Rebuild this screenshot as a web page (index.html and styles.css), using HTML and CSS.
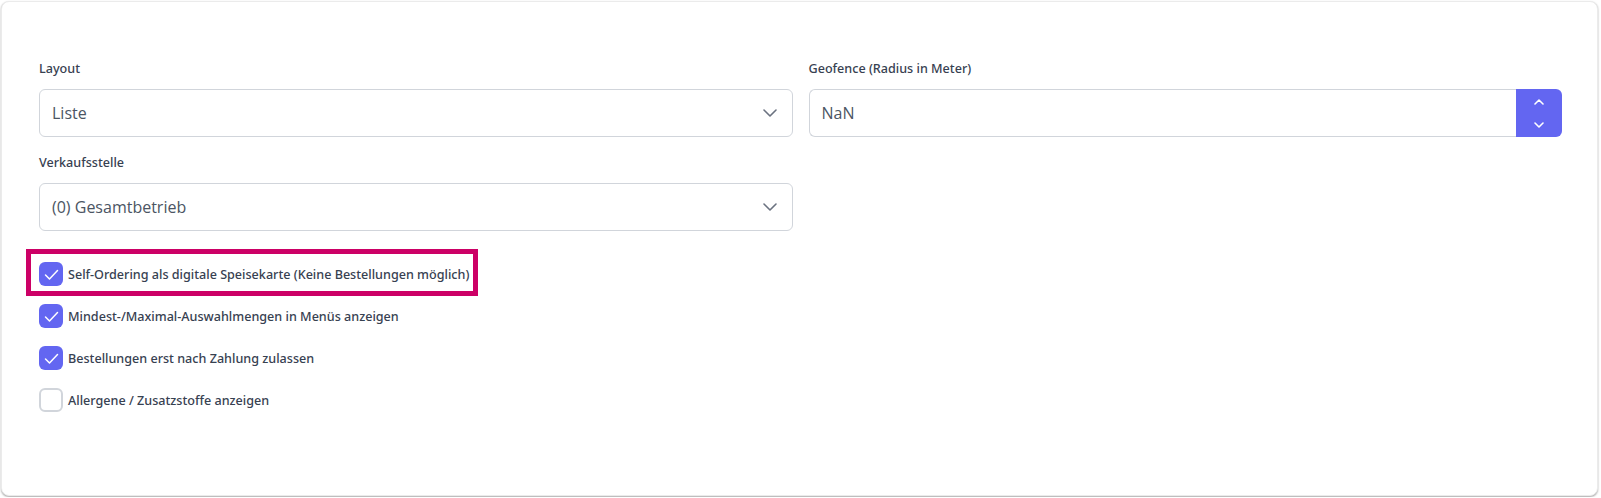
FILE: index.html
```html
<!DOCTYPE html>
<html lang="de">
<head>
    <meta charset="UTF-8">
    <meta name="viewport" content="width=device-width, initial-scale=1.0">
    <title>Self-Ordering Einstellungen</title>
    <link rel="stylesheet" href="styles.css">
</head>
<body>
    <div class="card">
        <div class="form-grid">
            <div class="field">
                <label class="field-label">Layout</label>
                <div class="select">
                    <span class="select-value">Liste</span>
                    <svg class="chevron" width="14" height="8" viewBox="0 0 14 8"><path d="M1 1 L7 7 L13 1" fill="none" stroke="#6b7280" stroke-width="1.6" stroke-linecap="round" stroke-linejoin="round"/></svg>
                </div>
            </div>

            <div class="field">
                <label class="field-label">Geofence (Radius in Meter)</label>
                <div class="number-input">
                    <div class="number-value">NaN</div>
                    <div class="stepper">
                        <svg width="10" height="6" viewBox="0 0 10 6"><path d="M1 5 L5 1 L9 5" fill="none" stroke="#fff" stroke-width="1.6" stroke-linecap="round" stroke-linejoin="round"/></svg>
                        <svg width="10" height="6" viewBox="0 0 10 6"><path d="M1 1 L5 5 L9 1" fill="none" stroke="#fff" stroke-width="1.6" stroke-linecap="round" stroke-linejoin="round"/></svg>
                    </div>
                </div>
            </div>

            <div class="field">
                <label class="field-label">Verkaufsstelle</label>
                <div class="select">
                    <span class="select-value">(0) Gesamtbetrieb</span>
                    <svg class="chevron" width="14" height="8" viewBox="0 0 14 8"><path d="M1 1 L7 7 L13 1" fill="none" stroke="#6b7280" stroke-width="1.6" stroke-linecap="round" stroke-linejoin="round"/></svg>
                </div>
            </div>
        </div>

        <div class="options">
            <div class="option highlight">
                <span class="checkbox checked">
                    <svg width="24" height="24" viewBox="0 0 24 24"><path d="M6.5 13 L10.5 17 L18.5 8.5" fill="none" stroke="#fff" stroke-width="1.5" stroke-linecap="round" stroke-linejoin="round"/></svg>
                </span>
                <span class="option-text">Self-Ordering als digitale Speisekarte (Keine Bestellungen möglich)</span>
            </div>
            <div class="option">
                <span class="checkbox checked">
                    <svg width="24" height="24" viewBox="0 0 24 24"><path d="M6.5 13 L10.5 17 L18.5 8.5" fill="none" stroke="#fff" stroke-width="1.5" stroke-linecap="round" stroke-linejoin="round"/></svg>
                </span>
                <span class="option-text">Mindest-/Maximal-Auswahlmengen in Menüs anzeigen</span>
            </div>
            <div class="option">
                <span class="checkbox checked">
                    <svg width="24" height="24" viewBox="0 0 24 24"><path d="M6.5 13 L10.5 17 L18.5 8.5" fill="none" stroke="#fff" stroke-width="1.5" stroke-linecap="round" stroke-linejoin="round"/></svg>
                </span>
                <span class="option-text">Bestellungen erst nach Zahlung zulassen</span>
            </div>
            <div class="option">
                <span class="checkbox"></span>
                <span class="option-text">Allergene / Zusatzstoffe anzeigen</span>
            </div>
        </div>
    </div>
</body>
</html>
```

FILE: styles.css
```css
body {
    margin: 0;
    padding: 1px 3px 1px 1px;
    background-color: #ffffff;
    font-family: 'Open Sans', 'Noto Sans', sans-serif;
    color: #374151;
}
.card {
    background-color: #fff;
    border: 1px solid #ebebeb;
    border-radius: 8px;
    box-shadow: 0 1px 2px rgba(0, 0, 0, 0.35);
    padding: 57px 35px 83px 37px;
    height: 495px;
    box-sizing: border-box;
}
.form-grid {
    display: grid;
    grid-template-columns: 1fr 1fr;
    column-gap: 16px;
    row-gap: 16px;
}
.field {
    display: flex;
    flex-direction: column;
}
.field-label {
    font-family: 'Noto Sans', 'Open Sans', sans-serif;
    font-size: 12.6px;
    line-height: 20px;
    font-weight: 500;
    color: #374151;
    margin-bottom: 10px;
}
.select {
    height: 48px;
    box-sizing: border-box;
    border: 1px solid #d1d5db;
    border-radius: 6px;
    display: flex;
    align-items: center;
    justify-content: space-between;
    padding: 0 15px 0 12px;
}
.select-value,
.number-value {
    font-size: 16px;
    color: #4b5563;
}
.number-input {
    display: flex;
    height: 48px;
}
.number-value {
    flex: 1;
    box-sizing: border-box;
    border: 1px solid #d1d5db;
    border-right: none;
    border-radius: 6px 0 0 6px;
    display: flex;
    align-items: center;
    padding-left: 12px;
}
.stepper {
    width: 46px;
    background-color: #6366f1;
    border-radius: 0 6px 6px 0;
    display: flex;
    flex-direction: column;
    align-items: center;
    justify-content: space-between;
    padding: 10px 0 9px;
    box-sizing: border-box;
}
.stepper svg {
    display: block;
}
.options {
    display: flex;
    flex-direction: column;
    align-items: flex-start;
    gap: 18px;
    margin-top: 31px;
}
.option {
    display: flex;
    align-items: center;
    gap: 5px;
    height: 24px;
    position: relative;
}
.option.highlight::after {
    content: "";
    position: absolute;
    top: -13px;
    right: -9px;
    bottom: -10px;
    left: -13px;
    border: 5px solid #cc0066;
}
.checkbox {
    width: 24px;
    height: 24px;
    box-sizing: border-box;
    border-radius: 6px;
    border: 2px solid #d1d5db;
    background-color: #fff;
    display: block;
}
.checkbox.checked {
    border: none;
    background-color: #6366f1;
}
.checkbox svg {
    display: block;
}
.option-text {
    font-family: 'Noto Sans', 'Open Sans', sans-serif;
    font-size: 12.6px;
    font-weight: 500;
    color: #374151;
}
```
